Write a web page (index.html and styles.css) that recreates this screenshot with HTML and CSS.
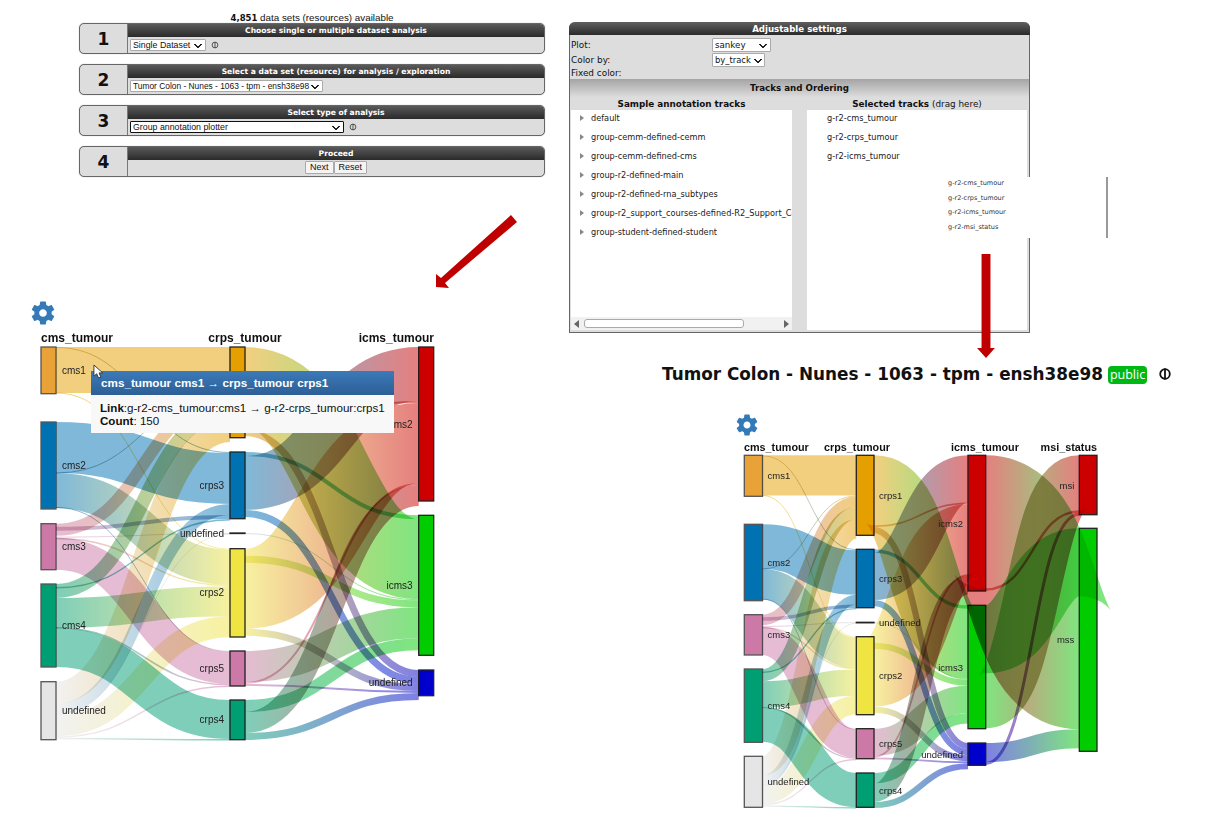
FILE: index.html
```html
<!DOCTYPE html>
<html lang="en">
<head>
<meta charset="utf-8">
<title>Group annotation plotter</title>
<link rel="stylesheet" href="styles.css">
</head>
<body>
<section class="wizard">
  <p class="avail"><b>4,851</b> data sets (resources) available</p>
  <div class="step">
    <div class="step-num">1</div>
    <div class="step-main">
      <div class="step-head">Choose single or multiple dataset analysis</div>
      <div class="step-body"><select class="sel sel-a"><option>Single Dataset</option></select><svg class="info-s" viewBox="0 0 10 10"><circle cx="5" cy="5" r="3.6"/><path d="M5 1.4V8.6"/></svg></div>
    </div>
  </div>
  <div class="step">
    <div class="step-num">2</div>
    <div class="step-main">
      <div class="step-head">Select a data set (resource) for analysis / exploration</div>
      <div class="step-body"><select class="sel sel-b"><option>Tumor Colon - Nunes - 1063 - tpm - ensh38e98</option></select></div>
    </div>
  </div>
  <div class="step">
    <div class="step-num">3</div>
    <div class="step-main">
      <div class="step-head">Select type of analysis</div>
      <div class="step-body"><select class="sel sel-c"><option>Group annotation plotter</option></select><svg class="info-s" viewBox="0 0 10 10"><circle cx="5" cy="5" r="3.6"/><path d="M5 1.4V8.6"/></svg></div>
    </div>
  </div>
  <div class="step">
    <div class="step-num">4</div>
    <div class="step-main">
      <div class="step-head">Proceed</div>
      <div class="step-body step-btns"><button class="btn">Next</button><button class="btn">Reset</button></div>
    </div>
  </div>
</section>

<section class="settings">
  <div class="set-head">Adjustable settings</div>
  <div class="set-rows">
    <div class="set-row"><span class="set-label">Plot:</span><select class="sel sel-d"><option>sankey</option></select></div>
    <div class="set-row"><span class="set-label">Color by:</span><select class="sel sel-e"><option>by_track</option></select></div>
    <div class="set-row"><span class="set-label">Fixed color:</span></div>
  </div>
  <div class="set-sub">Tracks and Ordering</div>
  <div class="track-cols">
    <div class="track-col">
      <div class="track-title">Sample annotation tracks</div>
      <div class="track-list">
        <ul class="tracks">
          <li class="arrowed">default</li>
          <li class="arrowed">group-cemm-defined-cemm</li>
          <li class="arrowed">group-cemm-defined-cms</li>
          <li class="arrowed">group-r2-defined-main</li>
          <li class="arrowed">group-r2-defined-rna_subtypes</li>
          <li class="arrowed">group-r2_support_courses-defined-R2_Support_Courses</li>
          <li class="arrowed">group-student-defined-student</li>
        </ul>
        <div class="hscroll"><span class="hs-l"></span><span class="hs-thumb"></span><span class="hs-r"></span></div>
      </div>
    </div>
    <div class="track-col">
      <div class="track-title">Selected tracks <span class="normal">(drag here)</span></div>
      <div class="track-list">
        <ul class="tracks tracks-sel">
          <li>g-r2-cms_tumour</li>
          <li>g-r2-crps_tumour</li>
          <li>g-r2-icms_tumour</li>
        </ul>
      </div>
    </div>
  </div>
</section>

<ul class="drag-preview">
  <li>g-r2-cms_tumour</li>
  <li>g-r2-crps_tumour</li>
  <li>g-r2-icms_tumour</li>
  <li>g-r2-msi_status</li>
</ul>

<svg class="arrow arrow-diag" viewBox="0 0 85 76"><path d="M77 2 83 9 11 70 15 75 2 74 2 61 7 65Z"/></svg>
<svg class="arrow arrow-down" viewBox="0 0 20 106"><path d="M5.500 0H14.500V95H19L10 105 1 95H5.500Z"/></svg>

<h1 class="title"><span>Tumor Colon - Nunes - 1063 - tpm - ensh38e98</span><span class="badge">public</span><svg class="info-l" viewBox="0 0 14 14"><circle cx="7" cy="7" r="4.800"/><path d="M7 1.500V12.500"/></svg></h1>

<svg class="gear gear-l" viewBox="2 2 20 20"><path d="M19.140 12.940c.04-.3.06-.61.06-.94 0-.32-.02-.64-.07-.94l2.030-1.580c.18-.14.23-.41.12-.61l-1.920-3.320c-.12-.22-.37-.29-.59-.22l-2.390.96c-.5-.38-1.030-.7-1.620-.94l-.36-2.540c-.04-.24-.24-.41-.48-.41h-3.840c-.24 0-.43.17-.47.41l-.36 2.540c-.59.24-1.130.57-1.620.94l-2.390-.96c-.22-.08-.47 0-.59.22L2.740 8.870c-.12.21-.08.47.12.61l2.030 1.580c-.05.3-.09.63-.09.94s.02.64.07.94l-2.030 1.580c-.18.14-.23.41-.12.61l1.920 3.320c.12.22.37.29.59.22l2.390-.96c.5.38 1.030.7 1.620.94l.36 2.540c.05.24.24.41.48.41h3.840c.24 0 .44-.17.47-.41l.36-2.540c.59-.24 1.130-.56 1.620-.94l2.390.96c.22.08.47 0 .59-.22l1.920-3.320c.12-.22.07-.47-.12-.61l-2.010-1.580zM12 15.200c-1.760 0-3.200-1.440-3.200-3.200s1.440-3.200 3.200-3.200 3.200 1.440 3.200 3.200-1.440 3.200-3.200 3.200z"/></svg>
<svg class="gear gear-r" viewBox="2 2 20 20"><path d="M19.140 12.940c.04-.3.06-.61.06-.94 0-.32-.02-.64-.07-.94l2.030-1.580c.18-.14.23-.41.12-.61l-1.920-3.320c-.12-.22-.37-.29-.59-.22l-2.390.96c-.5-.38-1.030-.7-1.620-.94l-.36-2.540c-.04-.24-.24-.41-.48-.41h-3.840c-.24 0-.43.17-.47.41l-.36 2.540c-.59.24-1.130.57-1.620.94l-2.390-.96c-.22-.08-.47 0-.59.22L2.740 8.870c-.12.21-.08.47.12.61l2.030 1.580c-.05.3-.09.63-.09.94s.02.64.07.94l-2.030 1.580c-.18.14-.23.41-.12.61l1.920 3.320c.12.22.37.29.59.22l2.390-.96c.5.38 1.030.7 1.620.94l.36 2.540c.05.24.24.41.48.41h3.840c.24 0 .44-.17.47-.41l.36-2.540c.59-.24 1.130-.56 1.620-.94l2.390.96c.22.08.47 0 .59-.22l1.920-3.320c.12-.22.07-.47-.12-.61l-2.010-1.580zM12 15.200c-1.760 0-3.200-1.440-3.200-3.200s1.440-3.200 3.200-3.200 3.200 1.440 3.200 3.200-1.440 3.200-3.200 3.200z"/></svg>

<svg id="sankey-left" class="sankey sankey-l"></svg>
<svg id="sankey-right" class="sankey sankey-r"></svg>

<div class="tooltip">
  <div class="tip-head">cms_tumour cms1 → crps_tumour crps1</div>
  <div class="tip-body"><b>Link</b>:g-r2-cms_tumour:cms1 → g-r2-crps_tumour:crps1<br><b>Count</b>: 150</div>
</div>
<svg class="cursor" viewBox="0 0 14 16"><path d="M1 1V13L4 10.500 6 15 8.500 14 6.500 9.500H10.500Z"/></svg>

<script src="sankey.js"></script>
</body>
</html>
```
FILE: styles.css
```css
html, body { margin: 0; padding: 0; background: #fff; }
body { width: 1228px; height: 823px; position: relative; overflow: hidden; font-family: "Liberation Sans", Arial, sans-serif; color: #111; }

/* collage pieces: each panel is a separate picture on a free canvas */
.wizard { position: absolute; left: 79px; top: 12px; width: 466px; display: flex; flex-direction: column; gap: 10px; }
.settings { position: absolute; left: 569px; top: 22px; width: 461px; height: 311px; box-sizing: border-box; background: #ddd; border: 1px solid #666; border-top: 0; border-radius: 6px 6px 0 0; display: flex; flex-direction: column; font-family: "DejaVu Sans", sans-serif; font-size: 8.900px; }

.avail { margin: 0 0 -10px; height: 11px; line-height: 11px; font-size: 9.800px; text-align: center; white-space: nowrap; }
.avail b { font-family: "DejaVu Sans", sans-serif; font-size: 8.500px; }

.step { display: flex; height: 31px; box-sizing: border-box; border: 1px solid #666; border-radius: 5px; background: #ddd; overflow: hidden; box-shadow: 0 0 1px #999; }
.step-num { width: 48px; flex: none; display: flex; align-items: center; justify-content: center; font: bold 17px "DejaVu Sans", sans-serif; color: #111; border-right: 1px solid #777; box-sizing: border-box; }
.step-main { flex: 1; display: flex; flex-direction: column; min-width: 0; }
.step-head { height: 13px; background: linear-gradient(#5a5a5a, #2a2a2a); color: #fff; font: bold 7.600px/13px "DejaVu Sans", sans-serif; text-align: center; }
.step-body { flex: 1; display: flex; align-items: center; padding: 0 0 1px 2px; gap: 5px; }
.step-btns { justify-content: center; gap: 0; padding-left: 0; }

.sel { appearance: none; -webkit-appearance: none; font: 8.800px "Liberation Sans", sans-serif; height: 12px; padding: 0 0 0 2px; box-sizing: border-box; border: 1px solid #aaa; border-radius: 1px; color: #111;
  background-color: #fff;
  background-image: linear-gradient(45deg, transparent 42%, #222 42%, #222 70%, transparent 70%), linear-gradient(-45deg, transparent 42%, #222 42%, #222 70%, transparent 70%);
  background-size: 4px 4px, 4px 4px;
  background-position: right 7px top 4px, right 3px top 4px;
  background-repeat: no-repeat; }
.sel-a { width: 76px; }
.sel-b { width: 193px; font-size: 8.400px; }
.sel-c { width: 214px; border: 1.500px solid #111; }
.sel-d { width: 59px; height: 14px; font: 8.700px "DejaVu Sans", sans-serif; background-position: right 7px top 5px, right 3px top 5px; }
.sel-e { width: 53px; height: 14px; font: 8.400px "DejaVu Sans", sans-serif; background-position: right 6px top 5px, right 2px top 5px; }
.btn { height: 13px; font: 9px/11px "Liberation Sans", sans-serif; padding: 0 4px; background: #f4f4f4; border: 1px solid #aaa; border-radius: 1px; color: #111; }
.info-s { width: 8px; height: 8px; fill: none; stroke: #222; stroke-width: .9; }

.set-head { height: 13px; background: linear-gradient(#5f5f5f, #2a2a2a); color: #fff; font: bold 8.650px/14px "DejaVu Sans", sans-serif; text-align: center; border-radius: 6px 6px 0 0; margin: 0 -1px; }
.set-rows { padding: 2px 1px 0; height: 44px; box-sizing: border-box; display: flex; flex-direction: column; }
.set-row { display: flex; align-items: center; height: 15px; flex: none; }
.set-row:last-child { height: 12px; }
.set-label { width: 141px; flex: none; }
.set-sub { height: 18px; line-height: 18px; background: linear-gradient(#a4a4a4, #dcdcdc); font-weight: bold; font-size: 8.700px; text-align: center; color: #111; }
.track-cols { flex: 1; display: grid; grid-template-columns: 221px 220px; justify-content: space-between; padding: 0 2px 2px 1px; min-height: 0; }
.track-col { display: flex; flex-direction: column; min-height: 0; min-width: 0; }
.track-title { height: 13px; line-height: 14px; font-weight: bold; font-size: 8.800px; text-align: center; }
.normal { font-weight: normal; font-size: 8.800px; }
.track-list { flex: 1; background: #fff; position: relative; overflow: hidden; min-height: 0; }
.tracks { list-style: none; margin: 0; padding: 0 0 0 20px; }
.tracks li { height: 19px; line-height: 17px; white-space: nowrap; font-size: 8.200px; color: #222; position: relative; }
.arrowed::before { content: ""; position: absolute; left: -11px; top: 5px; border-left: 4px solid #888; border-top: 3.500px solid transparent; border-bottom: 3.500px solid transparent; }
.hscroll { position: absolute; left: 0; right: 0; bottom: 0; height: 13px; background: #f1f1f1; display: flex; align-items: center; }
.hs-l, .hs-r { width: 0; height: 0; border-top: 4px solid transparent; border-bottom: 4px solid transparent; margin: 0 3px; flex: none; }
.hs-l { border-right: 5px solid #666; }
.hs-r { border-left: 5px solid #666; margin-left: auto; }
.hs-thumb { width: 160px; height: 9px; background: #fff; border: 1px solid #aaa; border-radius: 3px; box-sizing: border-box; margin-left: 2px; }

.drag-preview { position: absolute; left: 925px; top: 177px; width: 183px; height: 61px; margin: 0; padding: 0 0 0 23px; box-sizing: border-box; list-style: none; background: #fff; border-right: 2px solid #999; font: 6.500px/14.700px "DejaVu Sans", sans-serif; color: #333; }
.drag-preview li:first-child { margin-top: -1px; }

.arrow { position: absolute; fill: #c00000; }
.arrow-diag { left: 434px; top: 213px; width: 85px; height: 76px; }
.arrow-down { left: 976px; top: 254px; width: 20px; height: 105px; }

.title { position: absolute; left: 662px; top: 363px; margin: 0; display: flex; align-items: center; gap: 5px; font: bold 16.850px/22px "DejaVu Sans", sans-serif; color: #111; white-space: nowrap; }
.badge { background: #00b814; color: #fff; font: 12.500px/18px "Open Sans", sans-serif; padding: 0 2px; border-radius: 4px; height: 18px; margin-top: 2px; }
.info-l { width: 14px; height: 14px; margin-left: 6px; fill: none; stroke: #111; stroke-width: 1.800; }

.gear { position: absolute; fill: #337ab7; }
.gear-l { left: 31px; top: 301px; width: 24px; height: 24px; }
.gear-r { left: 736px; top: 414px; width: 22px; height: 22px; }

.sankey { position: absolute; isolation: isolate; overflow: hidden; }
.sankey-l { left: 20px; top: 325px; width: 430px; height: 425px; }
.sankey-r { left: 730px; top: 435px; width: 400px; height: 385px; }
.link { fill: none; opacity: .5; mix-blend-mode: multiply; }
.node { stroke: #222; stroke-width: 1.300; }
.node-first { stroke: #555; }
.lbl { font: 10px "Liberation Sans", sans-serif; fill: #222; }
.col-title { font: bold 12px "Liberation Sans", sans-serif; fill: #111; }
.sankey-r .lbl { font-size: 9.500px; }
.sankey-r .col-title { font-size: 10.800px; }

.tooltip { position: absolute; left: 91px; top: 371px; width: 303px; height: 62px; background: #f8f8f8; font-size: 11.600px; line-height: 13px; }
.tip-head { height: 24px; line-height: 24px; padding-left: 10px; background: linear-gradient(#3b7ab8, #2d5f96); color: #fff; font-weight: bold; font-size: 11.700px; white-space: nowrap; }
.tip-body { padding: 6px 0 0 9px; white-space: nowrap; }
.cursor { position: absolute; left: 93px; top: 364px; width: 13px; height: 15px; fill: #fff; stroke: #333; stroke-width: 1; }
```
FILE: sankey.js
```js
// Draws the two alluvial charts from one shared table of flows.
// A flow is [source, target, width, optional fixed offset inside the source node].
var NS = 'http://www.w3.org/2000/svg';
var COLORS = { cms1:'#e9a237', cms2:'#0072b2', cms3:'#cc79a7', cms4:'#009e73', u1:'#e5e5e5',
  crps1:'#e69f00', crps3:'#0072b2', u2:'#000000', crps2:'#f0e442', crps5:'#cc79a7', crps4:'#009e73',
  icms2:'#cc0000', icms3:'#00cc00', u3:'#0000cc', msi:'#cc0000', mss:'#00cc00' };
var LINK_COLORS = { cms1:'#e69f00', u2:'#c4c4c4' };
var NAMES = { u1:'undefined', u2:'undefined', u3:'undefined' };
var FLOWS = [
  ['cms1','crps3',1,0],['cms1','crps1',46],['cms1','crps2',1,45.5],
  ['cms2','crps3',51],['cms2','crps1',1,50.5],['cms2','crps2',35],['cms2','crps5',1,85],
  ['cms3','crps1',12],['cms3','crps3',4,3],['cms3','u2',.8,13],['cms3','crps2',1.5,14],['cms3','crps5',32,14],
  ['cms4','crps1',14],['cms4','crps3',1.5,3],['cms4','crps2',30],['cms4','crps5',1.5,43],['cms4','crps4',39],
  ['u1','crps1',22],['u1','crps3',11],['u1','u2',.6],['u1','crps2',21],['u1','crps5',1.5],['u1','crps4',1.5],
  ['crps1','icms3',80],['crps1','icms2',2],['crps1','u3',7],
  ['crps3','icms3',4],['crps3','icms2',54],['crps3','u3',7],
  ['u2','icms3',1],
  ['crps2','icms2',80],['crps2','icms3',7,7],['crps2','u3',7],
  ['crps5','icms3',31],['crps5','icms2',2],['crps5','u3',2],
  ['crps4','icms3',12],['crps4','icms2',21],['crps4','u3',7]
];
var TARGET_ORDER = { icms3:['crps3','crps1','u2','crps2','crps5','crps4'], icms2:['crps3','crps1','crps2','crps5','crps4'], u3:['crps1','crps3','crps2','crps5','crps4'],
  crps3:['cms1','cms2','u1','cms3','cms4'] };

function el(name, attrs, parent) {
  var e = document.createElementNS(NS, name);
  for (var k in attrs) e.setAttribute(k, attrs[k]);
  parent.appendChild(e);
  return e;
}

function draw(id, cfg) {
  var svg = document.getElementById(id);
  svg.setAttribute('viewBox', cfg.box.join(' '));
  var defs = el('defs', {}, svg);
  var nodeOf = {};
  cfg.cols.forEach(function (col, ci) {
    Object.keys(col.nodes).forEach(function (n) {
      nodeOf[n] = { x0: col.x[0], x1: col.x[1], top: col.nodes[n][0], bot: col.nodes[n][1], ci: ci, label: col.label };
    });
    var t = el('text', { x: col.titleX, y: cfg.titleY, 'text-anchor': col.titleAnchor, 'class': 'col-title' }, svg);
    t.textContent = col.title;
  });
  Object.keys(nodeOf).forEach(function (n) {
    var d = nodeOf[n];
    el('rect', { x: d.x0, y: d.top, width: d.x1 - d.x0, height: Math.max(d.bot - d.top, .5), fill: COLORS[n], 'class': d.ci === 0 ? 'node node-first' : 'node' }, svg);
  });
  var links = FLOWS.map(function (f) { return { s: f[0], t: f[1], w: f[2] * cfg.scale, off: f[3] === undefined ? undefined : f[3] * cfg.scale }; })
    .concat((cfg.extra || []).map(function (f) { return { s: f[0], t: f[1], w: f[2] }; }));
  var sCur = {};
  links.forEach(function (l) {
    var top = nodeOf[l.s].top;
    if (l.off !== undefined) { l.y0 = top + l.off + l.w / 2; return; }
    var c = sCur[l.s] === undefined ? top : sCur[l.s];
    l.y0 = c + l.w / 2;
    sCur[l.s] = c + l.w;
  });
  var order = Object.assign({}, TARGET_ORDER, cfg.order || {});
  Object.keys(nodeOf).forEach(function (n) {
    var c = nodeOf[n].top;
    var incoming = links.filter(function (l) { return l.t === n; });
    if (order[n]) incoming.sort(function (a, b) { return order[n].indexOf(a.s) - order[n].indexOf(b.s); });
    incoming.forEach(function (l) { l.y1 = c + l.w / 2; c += l.w; });
  });
  links.forEach(function (l, i) {
    var a = nodeOf[l.s], b = nodeOf[l.t], gid = id + '-g' + i;
    var g = el('linearGradient', { id: gid, gradientUnits: 'userSpaceOnUse', x1: a.x1, x2: b.x0, y1: 0, y2: 0 }, defs);
    el('stop', { offset: '0%', 'stop-color': LINK_COLORS[l.s] || COLORS[l.s] }, g);
    el('stop', { offset: '100%', 'stop-color': LINK_COLORS[l.t] || COLORS[l.t] }, g);
    var m = (a.x1 + b.x0) / 2;
    el('path', { d: 'M' + a.x1 + ' ' + l.y0 + 'C' + m + ' ' + l.y0 + ' ' + m + ' ' + l.y1 + ' ' + b.x0 + ' ' + l.y1,
      stroke: 'url(#' + gid + ')', 'stroke-width': Math.max(l.w, .8), 'class': 'link' }, svg);
  });
  Object.keys(nodeOf).forEach(function (n) {
    var d = nodeOf[n];
    var lx = d.label.side === 'right' ? d.x1 + d.label.gap : d.x0 - d.label.gap;
    var t = el('text', { x: lx, y: (d.top + d.bot) / 2 + 3.5, 'text-anchor': d.label.side === 'right' ? 'start' : 'end', 'class': 'lbl' }, svg);
    t.textContent = NAMES[n] || n;
  });
}

draw('sankey-left', {
  box: [20, 325, 430, 425], scale: 1, titleY: 342,
  cols: [
    { x: [41, 56], title: 'cms_tumour', titleX: 41, titleAnchor: 'start', label: { side: 'right', gap: 6 },
      nodes: { cms1: [347, 393.7], cms2: [422, 509], cms3: [523.7, 569.7], cms4: [584, 667], u1: [681.7, 739.7] } },
    { x: [230, 245], title: 'crps_tumour', titleX: 245, titleAnchor: 'middle', label: { side: 'left', gap: 6 },
      nodes: { crps1: [347, 437.7], crps3: [452, 518.7], u2: [533, 533.5], crps2: [548.7, 637], crps5: [651, 686], crps4: [700, 739.7] } },
    { x: [418.7, 433.7], title: 'icms_tumour', titleX: 434, titleAnchor: 'end', label: { side: 'left', gap: 6 },
      nodes: { icms2: [347, 501], icms3: [515.3, 655.3], u3: [670, 695.7] } }
  ]
});

draw('sankey-right', {
  box: [730, 435, 400, 385], scale: .875, titleY: 451,
  cols: [
    { x: [744.3, 762.5], title: 'cms_tumour', titleX: 744, titleAnchor: 'start', label: { side: 'right', gap: 5 },
      nodes: { cms1: [455.3, 496.3], cms2: [524.3, 600.7], cms3: [614.7, 655], cms4: [669, 742.3], u1: [756.3, 807.3] } },
    { x: [856.3, 874], title: 'crps_tumour', titleX: 857, titleAnchor: 'middle', label: { side: 'right', gap: 5 },
      nodes: { crps1: [455.3, 535.3], crps3: [549.3, 607.7], u2: [622.3, 622.8], crps2: [636.7, 714.7], crps5: [728.7, 758.7], crps4: [773, 807.3] } },
    { x: [968, 985.7], title: 'icms_tumour', titleX: 985, titleAnchor: 'middle', label: { side: 'left', gap: 5 },
      nodes: { icms2: [455.3, 591], icms3: [605.3, 728.7], u3: [743, 765.3] } },
    { x: [1079.3, 1097], title: 'msi_status', titleX: 1097, titleAnchor: 'end', label: { side: 'left', gap: 5 },
      nodes: { msi: [455.3, 514.7], mss: [528.3, 751.3] } }
  ],
  extra: [
    ['icms2','mss',133], ['icms2','msi',2.5],
    ['icms3','mss',68], ['icms3','msi',55],
    ['u3','mss',19], ['u3','msi',3]
  ],
  order: { msi: ['icms3','icms2','u3'], mss: ['icms3','icms2','u3'] }
});
```
